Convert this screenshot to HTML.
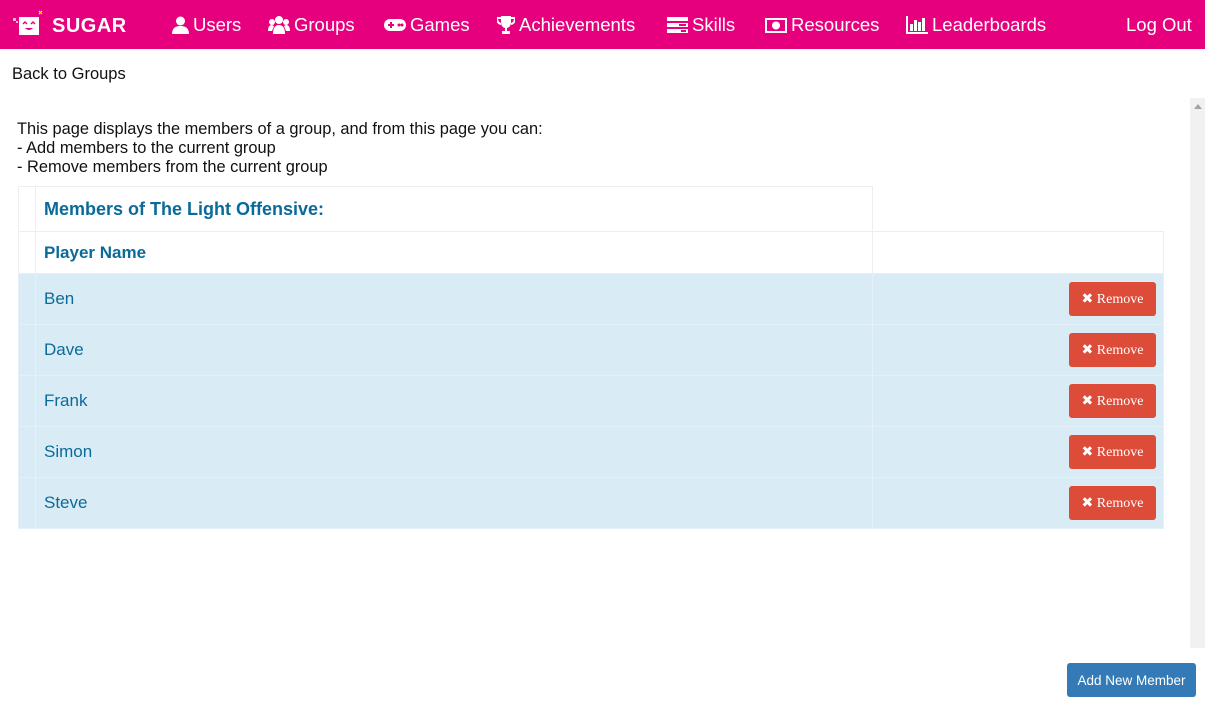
<!DOCTYPE html>
<html><head><meta charset="utf-8"><style>
*{box-sizing:border-box;margin:0;padding:0}
body{width:1205px;height:721px;overflow:hidden;background:#fff;font-family:"Liberation Sans",sans-serif;color:#111;position:relative}
.nav{position:absolute;left:0;top:0;width:1205px;height:49px;background:#e6007e;color:#fff}
.nav .it{position:absolute;top:14px;font-size:18.5px;white-space:nowrap;display:flex;align-items:center;gap:4px}
.nav svg{fill:#fff}
.abs{position:absolute}
table{position:absolute;left:18px;top:186px;border-collapse:collapse;width:1146px}
td{border:1px solid #eee;padding:0 8px;font-size:17px;color:#0a6a9a}
.hd{font-weight:bold;font-size:18px}
tr.d td{background:#d9ecf6;height:51px;border-color:#e4f1f8}
.btn{float:right;background:#dd4b39;color:#fff;font-family:"Liberation Serif",serif;font-size:14px;border-radius:3px;width:87px;height:34px;line-height:36px;text-align:center;margin-right:-1px}
</style></head><body>
<div class="nav">
 <div class="it" style="left:12px;top:10px">
  <svg width="32" height="28" viewBox="0 0 32 28"><rect x="7" y="7" width="20" height="18" fill="#fff"/><rect x="1" y="8" width="3" height="3" fill="#fbb"/><rect x="4" y="11" width="2" height="2" fill="#fbb"/><path d="M11 14l2-2 2 2M19 14l2-2 2 2" stroke="#e6007e" stroke-width="1.5" fill="none"/><path d="M13 18q4 4 8 0z" fill="#e6007e"/><path d="M27 1l3 3M30 1l-3 3" stroke="#ff0" stroke-width="1.2"/></svg>
  <span style="font-weight:bold;font-size:20px;letter-spacing:0.5px;margin-left:4px;margin-top:4px">SUGAR</span></div>
 <div class="it" style="left:172px"><svg width="17" height="18" viewBox="0 0 17 18"><circle cx="8.5" cy="5" r="4.5"/><path d="M0 18q0-8 8.5-8t8.5 8z"/></svg>Users</div>
 <div class="it" style="left:268px"><svg width="22" height="18" viewBox="0 0 22 18"><circle cx="11" cy="4" r="4"/><circle cx="4" cy="6" r="3"/><circle cx="18" cy="6" r="3"/><path d="M5 18q0-9 6-9t6 9zM0 15q0-6 4-6l2 1-2 5zM22 15q0-6-4-6l-2 1 2 5z"/></svg>Groups</div>
 <div class="it" style="left:384px"><svg width="22" height="14" viewBox="0 0 22 14"><rect x="0" y="1" width="22" height="12" rx="6"/><rect x="4" y="6" width="6" height="2" fill="#e6007e"/><rect x="6" y="4" width="2" height="6" fill="#e6007e"/><circle cx="15" cy="7" r="1.5" fill="#e6007e"/><circle cx="18" cy="7" r="1.5" fill="#e6007e"/></svg>Games</div>
 <div class="it" style="left:497px"><svg width="18" height="18" viewBox="0 0 18 18"><path d="M4 0h10v6q0 5-4 6v3h3v3H5v-3h3v-3Q4 11 4 6z"/><path d="M4 2H0q0 5 4 6M14 2h4q0 5-4 6" stroke="#fff" stroke-width="2" fill="none"/></svg>Achievements</div>
 <div class="it" style="left:667px"><svg width="21" height="17" viewBox="0 0 21 17"><rect width="21" height="4"/><rect y="6" width="21" height="4"/><rect y="12" width="21" height="4"/><rect x="12" y="7" width="7" height="2" fill="#e6007e"/><rect x="14" y="13" width="5" height="2" fill="#e6007e"/></svg>Skills</div>
 <div class="it" style="left:765px"><svg width="22" height="15" viewBox="0 0 22 15"><rect width="22" height="15"/><rect x="2" y="2" width="18" height="11" fill="#e6007e"/><circle cx="11" cy="7.5" r="4" fill="#fff"/></svg>Resources</div>
 <div class="it" style="left:906px"><svg width="22" height="18" viewBox="0 0 22 18"><rect x="0" y="0" width="2" height="18"/><rect x="0" y="16" width="22" height="2"/><rect x="4" y="8" width="3" height="7"/><rect x="8" y="4" width="3" height="11"/><rect x="12" y="6" width="3" height="9"/><rect x="16" y="2" width="3" height="13"/></svg>Leaderboards</div>
 <div class="it" style="left:1126px">Log Out</div>
</div>
<div class="abs" style="left:12px;top:65px;font-size:16.5px">Back to Groups</div>
<div class="abs" style="left:17px;top:120px;font-size:16.4px;line-height:19px">This page displays the members of a group, and from this page you can:<br>- Add members to the current group<br>- Remove members from the current group</div>
<div class="abs" style="left:1190px;top:98px;width:15px;height:550px;background:#f1f1f1"></div>
<div class="abs" style="left:1194px;top:104px;width:0;height:0;border:4px solid transparent;border-bottom:5px solid #a3a3a3;border-top:0"></div>
<table>
<tr style="height:45px"><td style="width:17px"></td><td class="hd" style="width:837px">Members of The Light Offensive:</td><td style="border:none;border-left:1px solid #eee"></td></tr>
<tr style="height:42px"><td></td><td class="hd" style="font-size:17px">Player Name</td><td></td></tr>
<tr class="d"><td></td><td>Ben</td><td><span class="btn">✖ Remove</span></td></tr>
<tr class="d"><td></td><td>Dave</td><td><span class="btn">✖ Remove</span></td></tr>
<tr class="d"><td></td><td>Frank</td><td><span class="btn">✖ Remove</span></td></tr>
<tr class="d"><td></td><td>Simon</td><td><span class="btn">✖ Remove</span></td></tr>
<tr class="d"><td></td><td>Steve</td><td><span class="btn">✖ Remove</span></td></tr>
</table>
<div class="abs" style="left:1067px;top:663px;width:129px;height:34px;background:#337ab7;border-radius:3px;color:#fff;font-size:13.5px;line-height:35px;text-align:center">Add New Member</div>
</body></html>
